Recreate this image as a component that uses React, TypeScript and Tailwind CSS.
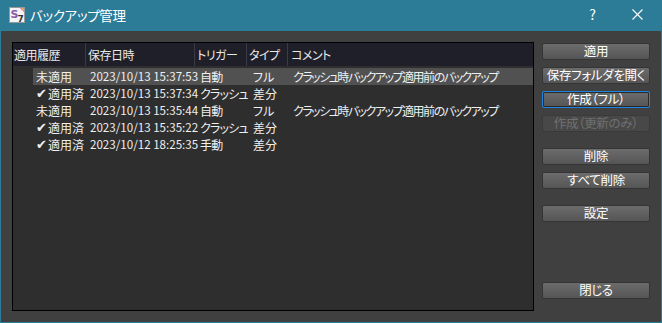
import React from "react";

const rows = [
  { status: "未適用", applied: false, date: "2023/10/13 15:37:53", trigger: "自動", type: "フル", comment: "クラッシュ時バックアップ適用前のバックアップ", selected: true },
  { status: "適用済", applied: true, date: "2023/10/13 15:37:34", trigger: "クラッシュ", type: "差分", comment: "" },
  { status: "未適用", applied: false, date: "2023/10/13 15:35:44", trigger: "自動", type: "フル", comment: "クラッシュ時バックアップ適用前のバックアップ" },
  { status: "適用済", applied: true, date: "2023/10/13 15:35:22", trigger: "クラッシュ", type: "差分", comment: "" },
  { status: "適用済", applied: true, date: "2023/10/12 18:25:35", trigger: "手動", type: "差分", comment: "" },
];

function AppIcon() {
  return (
    <svg width="16" height="16" viewBox="0 0 16 16">
      <rect x="0.5" y="0.5" width="15" height="15" fill="#f4f4f4" stroke="#9a9a9a" />
      <path d="M11 1 L15 1 L15 5 Z" fill="#e94f8a" />
      <path d="M12 1 L15 1 L15 4 Z" fill="#f5c542" />
      <path d="M13.5 1 L15 1 L15 2.5 Z" fill="#4fb3e8" />
      <text x="1.5" y="11" fontSize="11" fontWeight="bold" fill="#8a5aa8" fontFamily="'DejaVu Sans', sans-serif">S</text>
      <text x="8.5" y="15" fontSize="9" fontWeight="bold" fill="#333" fontFamily="'DejaVu Sans', sans-serif">7</text>
    </svg>
  );
}

function Btn({ label, focused, disabled, className }: { label: string; focused?: boolean; disabled?: boolean; className?: string }) {
  return (
    <button
      className={
        "h-[17px] w-[108px] rounded-[2px] border text-[12.5px] leading-none flex items-center justify-center whitespace-nowrap tracking-[-0.3px] " +
        (disabled
          ? "border-[#3a3a3a] bg-[#484848] text-[#707070] "
          : focused
          ? "border-[#1f84e0] bg-gradient-to-b from-[#6c6c6c] to-[#555555] text-white shadow-[inset_0_0_0_1px_#2a2a2a] "
          : "border-[#353535] bg-gradient-to-b from-[#6c6c6c] to-[#555555] text-white ") +
        (className ?? "")
      }
    >
      {label}
    </button>
  );
}

export default function App() {
  return (
    <div
      className="w-[662px] h-[323px] flex flex-col bg-[#2c7b97] [font-feature-settings:'palt'] select-none"
      style={{ fontFamily: "'Noto Sans CJK JP', 'DejaVu Sans', sans-serif" }}
    >
      {/* Title bar */}
      <div className="h-[31px] flex items-center shrink-0">
        <div className="ml-[9px] mb-[2px]">
          <AppIcon />
        </div>
        <span className="ml-[5px] text-[13.5px] text-white mb-[1px] tracking-[-0.3px]">バックアップ管理</span>
        <span className="ml-auto mr-[36px] text-[14px] text-white mb-[2px]">?</span>
        <svg width="11" height="11" viewBox="0 0 11 11" className="mr-[19px] mb-[2px]">
          <path d="M0.5 0.5 L10.5 10.5 M10.5 0.5 L0.5 10.5" stroke="#fff" strokeWidth="1.1" />
        </svg>
      </div>

      {/* Body */}
      <div className="flex-1 mx-[1px] mb-[1px] bg-[#404040] flex pl-[11px] pt-[11px] pb-[11px] pr-[11px]">
        {/* List */}
        <div className="w-[522px] border border-black bg-[#2e2e2e] flex flex-col text-[12px] text-[#f0f0f0]">
          <div className="h-[23px] bg-[#1f1f29] flex items-center text-[#e8e8e8] tracking-[-0.5px]">
            <div className="w-[73px] pl-[1px] h-full flex items-center border-r border-[#3b3b47]">適用履歴</div>
            <div className="w-[109px] pl-[2px] h-full flex items-center border-r border-[#3b3b47]">保存日時</div>
            <div className="w-[52px] pl-[2px] h-full flex items-center border-r border-[#3b3b47]">トリガー</div>
            <div className="w-[41px] pl-[2px] h-full flex items-center border-r border-[#3b3b47]">タイプ</div>
            <div className="flex-1 pl-[3px] h-full flex items-center">コメント</div>
          </div>
          <div className="mt-[2px] flex flex-col">
            {rows.map((r, i) => (
              <div key={i} className="h-[17px] flex">
                <div className="w-[20px] shrink-0" />
                <div className={"flex-1 flex items-center " + (r.selected ? "bg-[#515151]" : "")}>
                  <div className="w-[53px] pl-[3px] flex items-center whitespace-nowrap">
                    {r.applied && (
                      <span className="text-[13px] leading-none mr-[1px]" style={{ fontFamily: "'DejaVu Sans', sans-serif" }}>
                        ✔
                      </span>
                    )}
                    {r.status}
                  </div>
                  <div className="w-[110px] pl-[4px] whitespace-nowrap text-[11.6px]">{r.date}</div>
                  <div className="w-[52px] pl-[4px] whitespace-nowrap tracking-[-0.8px]">{r.trigger}</div>
                  <div className="w-[40px] pl-[5px] whitespace-nowrap">{r.type}</div>
                  <div className="flex-1 pl-[5px] whitespace-nowrap tracking-[-1.5px]">{r.comment}</div>
                </div>
              </div>
            ))}
          </div>
        </div>

        {/* Buttons */}
        <div className="ml-[8px] flex flex-col pt-[1px]">
          <Btn label="適用" />
          <Btn label="保存フォルダを開く" className="mt-[7px]" />
          <Btn label="作成（フル）" focused className="mt-[7px]" />
          <Btn label="作成（更新のみ）" disabled className="mt-[7px]" />
          <Btn label="削除" className="mt-[16px]" />
          <Btn label="すべて削除" className="mt-[7px]" />
          <Btn label="設定" className="mt-[16px]" />
          <Btn label="閉じる" className="mt-[60px]" />
        </div>
      </div>
    </div>
  );
}
